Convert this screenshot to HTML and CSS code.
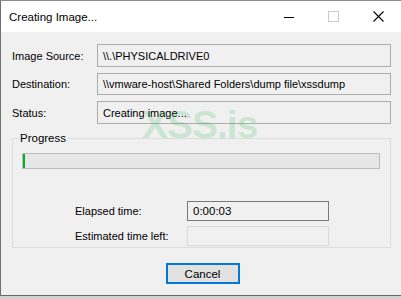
FILE: index.html
```html
<!DOCTYPE html>
<html>
<head>
<meta charset="utf-8">
<title>Creating Image...</title>
<link rel="stylesheet" href="styles.css">
</head>
<body>
<div class="window">
  <div class="titlebar">
    <span class="title">Creating Image...</span>
    <div class="caption">
      <span class="cbtn"><svg width="10" height="10" viewBox="0 0 10 10"><line x1="0" y1="5.5" x2="10" y2="5.5" stroke="#000" stroke-width="1"/></svg></span>
      <span class="cbtn"><svg width="11" height="11" viewBox="0 0 11 11"><rect x="0.5" y="0.5" width="10" height="10" fill="none" stroke="#cccccc" stroke-width="1"/></svg></span>
      <span class="cbtn"><svg width="11" height="11" viewBox="0 0 11 11"><path d="M0.5 0.5 L10.5 10.5 M10.5 0.5 L0.5 10.5" stroke="#000" stroke-width="1.1" fill="none"/></svg></span>
    </div>
  </div>
  <div class="content">
    <div class="form">
      <span class="label">Image Source:</span>
      <div class="field">\\.\PHYSICALDRIVE0</div>
      <span class="label">Destination:</span>
      <div class="field">\\vmware-host\Shared Folders\dump file\xssdump</div>
      <span class="label">Status:</span>
      <div class="field">Creating image...</div>
    </div>
    <fieldset class="group">
      <legend class="legend">Progress</legend>
      <div class="progress"><div class="progress-fill" style="width: 2px"></div></div>
      <div class="times">
        <span class="label">Elapsed time:</span>
        <div class="tbox active">0:00:03</div>
        <span class="label">Estimated time left:</span>
        <div class="tbox"></div>
      </div>
    </fieldset>
    <div class="actions">
      <button class="btn">Cancel</button>
    </div>
    <div class="watermark">XSS.is</div>
  </div>
</div>
</body>
</html>
```

FILE: styles.css
```css
html, body {
  margin: 0;
  padding: 0;
}
body {
  width: 401px;
  height: 299px;
  background: #d2d2d2;
  font-family: "Liberation Sans", Arial, sans-serif;
  font-size: 11px;
  color: #000;
  overflow: hidden;
}
.window {
  box-sizing: border-box;
  width: 401px;
  height: 296px;
  border-top: 1px solid #8c8c8c;
  border-left: 1px solid #707070;
  border-bottom: 1px solid #6a6a6a;
  display: flex;
  flex-direction: column;
  background: #f0f0f0;
}
.titlebar {
  height: 31px;
  flex: none;
  background: #ffffff;
  display: flex;
  align-items: center;
  padding-left: 8px;
}
.title {
  font-size: 11.5px;
  flex: 1;
  padding-top: 1px;
}
.caption {
  display: flex;
  height: 31px;
}
.cbtn {
  width: 45px;
  display: flex;
  align-items: center;
  justify-content: center;
}
.content {
  position: relative;
  flex: 1;
  padding: 12px 10px 0 11px;
}
.form {
  display: grid;
  grid-template-columns: 85px 1fr;
  row-gap: 6px;
  align-items: center;
}
.field {
  box-sizing: border-box;
  height: 23px;
  border: 1px solid #adadad;
  background: #f0f0f0;
  padding: 0 5px;
  display: flex;
  align-items: center;
  white-space: nowrap;
}
.form .field:nth-of-type(2) {
  height: 22px;
}
.group {
  margin: 8px 0 0 0;
  padding: 0 10px 0 9px;
  border: 1px solid #dcdcdc;
  height: 116px;
  box-sizing: border-box;
  min-width: 0;
}
.legend {
  margin-left: -3px;
  padding: 0 2px 0 1px;
  font-size: 11.5px;
  line-height: 13px;
}
.progress {
  margin-top: 8px;
  height: 16px;
  box-sizing: border-box;
  border: 1px solid #bcbcbc;
  background: #e6e6e6;
  display: flex;
}
.progress-fill {
  background: #06b025;
}
.times {
  display: grid;
  grid-template-columns: 112px 142px;
  row-gap: 5px;
  align-items: center;
  margin: 32px 0 0 53px;
}
.tbox {
  box-sizing: border-box;
  height: 20px;
  border: 1px solid #d9d9d9;
  background: #f0f0f0;
  padding: 0 5px;
  display: flex;
  align-items: center;
  font-size: 11.5px;
}
.tbox.active {
  border-color: #7a7a7a;
}
.actions {
  display: flex;
  justify-content: center;
  padding-left: 2px;
  margin-top: 15px;
}
.btn {
  box-sizing: border-box;
  width: 74px;
  height: 21px;
  border: 2px solid #0078d7;
  background: #e1e1e1;
  font-family: "Liberation Sans", Arial, sans-serif;
  font-size: 11.5px;
  color: #000;
  padding: 0;
  margin: 0;
}
.watermark {
  position: absolute;
  left: 141px;
  top: 73px;
  font-family: "Liberation Sans", Arial, sans-serif;
  font-weight: bold;
  font-size: 39px;
  line-height: 40px;
  letter-spacing: -1px;
  color: rgba(0, 170, 50, 0.17);
  pointer-events: none;
}
```
